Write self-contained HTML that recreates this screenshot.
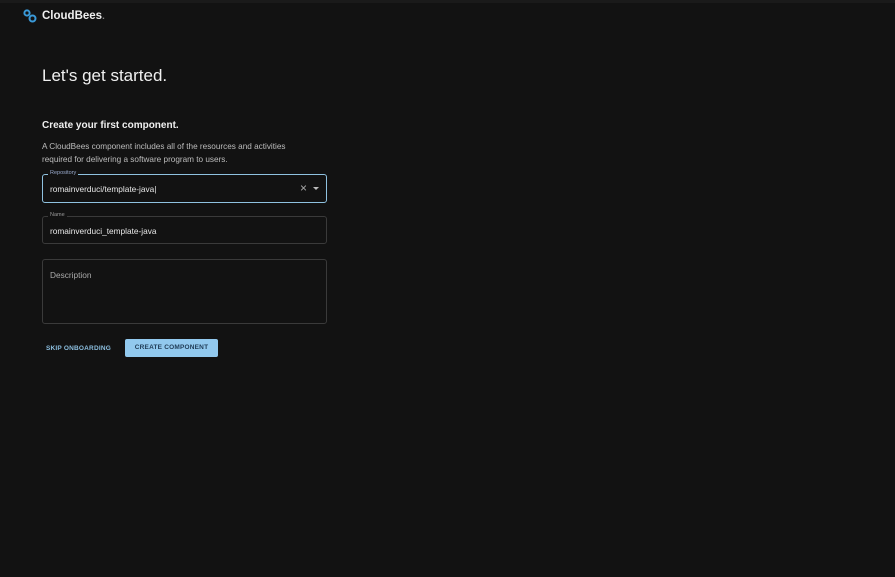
<!DOCTYPE html>
<html><head><meta charset="utf-8"><style>
*{margin:0;padding:0;box-sizing:border-box}
body{width:895px;height:577px;background:#121212;font-family:"Liberation Sans",sans-serif;color:#e6e6e6;position:relative;overflow:hidden}
.top{position:absolute;left:0;top:0;width:895px;height:3px;background:#1a1a1a}
.logo{position:absolute;left:23px;top:9px;display:flex;align-items:center}
.logo span{font-size:11.5px;font-weight:bold;color:#eee;margin-left:5px}
h1{position:absolute;left:42px;top:66px;font-size:17px;font-weight:normal;color:#f0f0f0}
h2{position:absolute;left:42px;top:120px;font-size:10px;font-weight:bold;color:#f0f0f0}
p{position:absolute;left:42px;top:141px;font-size:8.2px;line-height:12.5px;color:#bdbdbd;width:262px}
.f{position:absolute;left:42px;width:285px;border:1px solid #3a3a3a;border-radius:3px;font-size:8.3px;color:#e8e8e8}
.lab{position:absolute;top:-5px;left:5px;background:#121212;padding:0 2px;font-size:5.5px;color:#999}
.f1{top:174px;height:29px;border:1.5px solid #8fc2e0}
.f1 .lab{color:#9ac;}
.f2{top:216px;height:28px}
.f3{top:259px;height:65px;color:#aaa}
.t{position:absolute;left:7px;top:9px}
.btn1{position:absolute;left:46px;top:345px;font-size:6.5px;font-weight:bold;color:#8cbfe0;letter-spacing:.2px}
.btn2{position:absolute;left:125px;top:339px;width:93px;height:18px;background:#92c9ee;border-radius:2px;font-size:6.5px;font-weight:bold;color:#1f3b55;text-align:center;line-height:18px;letter-spacing:.2px}
</style></head><body>
<div class="top"></div>
<div class="logo"><svg width="14" height="14" viewBox="0 0 14 14"><circle cx="4" cy="4" r="2.6" fill="none" stroke="#3a9ad9" stroke-width="2"/><circle cx="9.5" cy="9.5" r="3" fill="none" stroke="#3a9ad9" stroke-width="2"/></svg><span>CloudBees<small style="color:#888">.</small></span></div>
<h1>Let's get started.</h1>
<h2>Create your first component.</h2>
<p>A CloudBees component includes all of the resources and activities required for delivering a software program to users.</p>
<div class="f f1"><div class="lab">Repository</div><div class="t">romainverduci/template-java|</div><div style="position:absolute;right:19px;top:6px;font-size:12px;color:#aaa">×</div><div style="position:absolute;right:7px;top:12px;border-left:3px solid transparent;border-right:3px solid transparent;border-top:3px solid #bbb"></div></div>
<div class="f f2"><div class="lab">Name</div><div class="t">romainverduci_template-java</div></div>
<div class="f f3"><div class="t" style="top:10px">Description</div></div>
<div class="btn1">SKIP ONBOARDING</div>
<div class="btn2">CREATE COMPONENT</div>
</body></html>
